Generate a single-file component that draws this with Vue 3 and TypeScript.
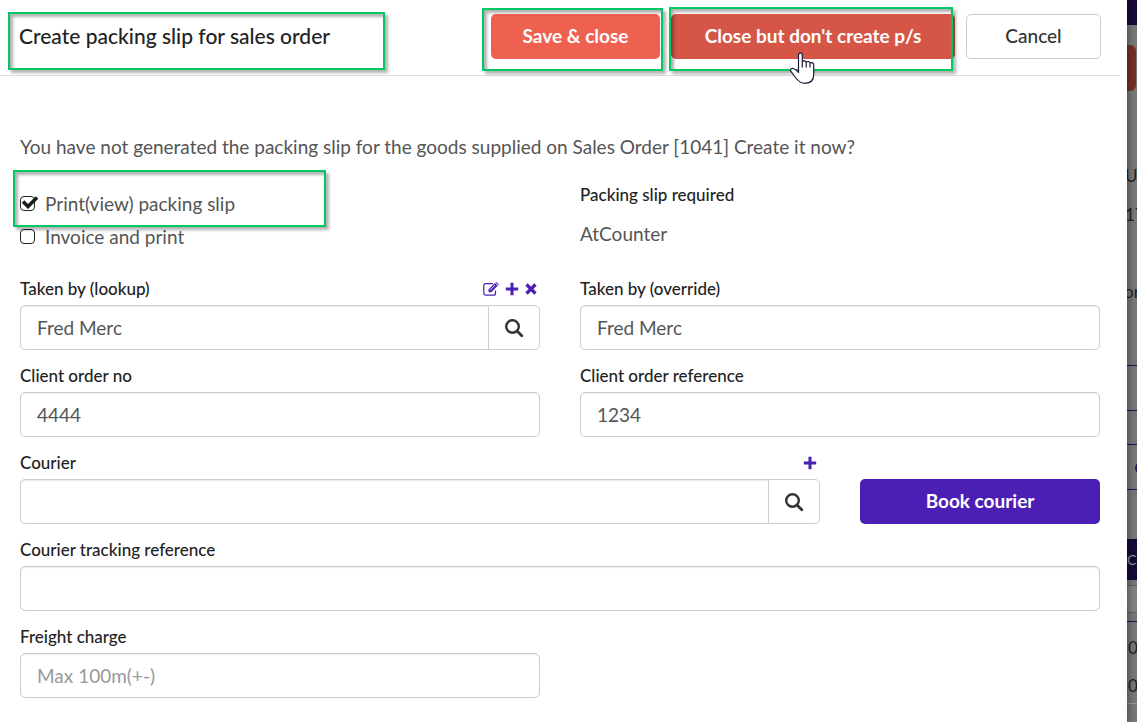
<script setup lang="ts">
import { reactive } from 'vue'

const form = reactive({
  printSlip: true,
  invoicePrint: false,
  takenBy: 'Fred Merc',
  takenByOverride: 'Fred Merc',
  orderNo: '4444',
  orderRef: '1234',
  courier: '',
  tracking: '',
  freight: '',
})
</script>

<template>
  <div class="screen">
    <main class="dialog" role="dialog" aria-labelledby="dialog-title">
      <header class="bar">
        <div class="title-wrap">
          <h1 id="dialog-title">Create packing slip for sales order</h1>
          <span class="mark mark-title"></span>
        </div>
        <div class="actions">
          <div class="action save">
            <button type="button" class="btn primary">Save &amp; close</button>
            <span class="mark mark-save"></span>
          </div>
          <div class="action skip">
            <button type="button" class="btn primary hovered">Close but don't create p/s</button>
            <span class="mark mark-skip"></span>
            <svg class="pointer" width="26" height="34" viewBox="0 0 26 34" aria-hidden="true">
              <path d="M8.500 18.500V3.200C8.500 .2 12.300 .2 12.300 3.200V10C13.500 8.300 15.800 8.700 16.200 10.300C17.800 8.900 19.600 9.500 20 11C21.800 10 23.700 11 23.700 13V22.500C23.700 28 20.500 31.300 15 31.300C10.500 31.300 8 29 5.500 25.500L.8 19.200C-.2 17.200 1.500 16 3.200 16.500C5.500 17.200 7 18.800 8.500 20.200Z" fill="#fff" />
              <path d="M8.500 18.500V3.200C8.500 .2 12.300 .2 12.300 3.200V10C13.500 8.300 15.800 8.700 16.200 10.300C17.800 8.900 19.600 9.500 20 11C21.800 10 23.700 11 23.700 13V22.500C23.700 28 20.500 31.300 15 31.300C10.500 31.300 8 29 5.500 25.500L.8 19.200C-.2 17.200 1.500 16 3.200 16.500C5.500 17.200 7 18.800 8.500 20.200ZM12.300 10V15.500M16.200 10.300V15.500M20 11V15.500" fill="none" stroke="#1d1a33" stroke-width="1.200" />
            </svg>
          </div>
          <div class="action cancel">
            <button type="button" class="btn plain">Cancel</button>
          </div>
        </div>
      </header>

      <form class="body" @submit.prevent>
        <p class="intro">You have not generated the packing slip for the goods supplied on Sales Order [1041] Create it now?</p>

        <div class="two top-row">
          <div class="checks">
            <label class="check"><input v-model="form.printSlip" type="checkbox" />
              <svg v-if="form.printSlip" class="tick" width="18" height="14" viewBox="0 0 18 14" aria-hidden="true"><path d="M2 6.500L7 11.500L16 2.500" fill="none" stroke="#1c1c1c" stroke-width="3.600" /></svg>
              <span>Print(view) packing slip</span>
            </label>
            <label class="check"><input v-model="form.invoicePrint" type="checkbox" /><span>Invoice and print</span></label>
            <span class="mark mark-check"></span>
          </div>
          <div>
            <div class="label">Packing slip required</div>
            <div class="value">AtCounter</div>
          </div>
        </div>

        <div class="two">
          <div class="field">
            <div class="label-row">
              <label class="label" for="taken">Taken by (lookup)</label>
              <span class="tools">
                <button type="button" class="tool" aria-label="Edit">
                  <svg width="16" height="14" viewBox="0 0 16 14"><path d="M12.500 8.500V11.200A2 2 0 0 1 10.500 13.200H2.800A2 2 0 0 1 .8 11.200V3.600A2 2 0 0 1 2.800 1.600H10" fill="none" stroke="currentColor" stroke-width="1.200" /><path d="M5.500 10.200V7.400L11.900 1L14.700 3.800L8.300 10.200Z" fill="currentColor" /><path d="M12.500 .5L13.300 0L15.900 2.600L15.300 3.300Z" fill="currentColor" /><path d="M7 8.200L12 3.200" stroke="#fff" stroke-width=".8" /></svg>
                </button>
                <button type="button" class="tool" aria-label="Add">
                  <svg width="14" height="14" viewBox="0 0 14 14"><path d="M7 .8V13.200M.8 7H13.200" stroke="currentColor" stroke-width="3" /></svg>
                </button>
                <button type="button" class="tool" aria-label="Clear">
                  <svg width="12" height="12" viewBox="0 0 12 12"><path d="M1.500 1.500L10.500 10.500M10.500 1.500L1.500 10.500" stroke="currentColor" stroke-width="3.200" /></svg>
                </button>
              </span>
            </div>
            <div class="group">
              <input id="taken" v-model="form.takenBy" type="text" />
              <button type="button" class="find" aria-label="Find person">
                <svg width="20" height="20" viewBox="0 0 20 20"><circle cx="8.500" cy="8.500" r="6.300" fill="none" stroke="currentColor" stroke-width="2.400" /><path d="M13 13L17.800 17.800" stroke="currentColor" stroke-width="2.800" stroke-linecap="round" /></svg>
              </button>
            </div>
          </div>
          <div class="field">
            <label class="label" for="override">Taken by (override)</label>
            <input id="override" v-model="form.takenByOverride" type="text" />
          </div>
        </div>

        <div class="two">
          <div class="field">
            <label class="label" for="order-no">Client order no</label>
            <input id="order-no" v-model="form.orderNo" type="text" />
          </div>
          <div class="field">
            <label class="label" for="order-ref">Client order reference</label>
            <input id="order-ref" v-model="form.orderRef" type="text" />
          </div>
        </div>

        <div class="courier-row">
          <div class="field">
            <div class="label-row">
              <label class="label" for="courier">Courier</label>
              <span class="tools">
                <button type="button" class="tool" aria-label="Add courier">
                  <svg width="14" height="14" viewBox="0 0 14 14"><path d="M7 .8V13.200M.8 7H13.200" stroke="currentColor" stroke-width="3" /></svg>
                </button>
              </span>
            </div>
            <div class="group">
              <input id="courier" v-model="form.courier" type="text" />
              <button type="button" class="find" aria-label="Find courier">
                <svg width="20" height="20" viewBox="0 0 20 20"><circle cx="8.500" cy="8.500" r="6.300" fill="none" stroke="currentColor" stroke-width="2.400" /><path d="M13 13L17.800 17.800" stroke="currentColor" stroke-width="2.800" stroke-linecap="round" /></svg>
              </button>
            </div>
          </div>
          <button type="button" class="btn book">Book courier</button>
        </div>

        <div class="field">
          <label class="label" for="tracking">Courier tracking reference</label>
          <input id="tracking" v-model="form.tracking" type="text" />
        </div>

        <div class="two">
          <div class="field">
            <label class="label" for="freight">Freight charge</label>
            <input id="freight" v-model="form.freight" type="text" placeholder="Max 100m(+-)" />
          </div>
        </div>
      </form>
    </main>

    <aside class="behind" aria-hidden="true">
      <div class="nav"></div>
      <div class="red"></div>
      <div class="texts"><span>U</span><span>17</span></div>
      <div class="lone">or</div>
      <div class="line first"></div>
      <div class="line second"></div>
      <div class="dot-row"><i></i></div>
      <div class="blank"></div>
      <div class="band">C</div>
      <div class="box"></div>
      <div class="zeros"><span>0</span><span>0</span></div>
      <div class="rest"></div>
    </aside>
  </div>
</template>

<style>
body {
  background: #777;
}
</style>

<style scoped>
* {
  box-sizing: border-box;
}
.screen {
  display: flex;
  min-height: 100vh;
  font-family: Lato, "Liberation Sans", sans-serif;
  font-size: 19px;
  line-height: 24px;
  color: #555;
}
button,
input {
  font: inherit;
}
.dialog {
  flex: 1;
  min-width: 0;
  background: #fff;
  padding-right: 7px;
  z-index: 1;
  box-shadow: 0 0 8px rgba(0, 0, 0, 0.5);
}
.bar {
  display: flex;
  justify-content: space-between;
  padding: 14px 19px 16px;
  border-bottom: 1px solid #e0e0e0;
}
.title-wrap,
.action,
.checks {
  position: relative;
}
h1 {
  margin: 0;
  font-size: 21px;
  font-weight: 500;
  line-height: 44px;
  color: #222;
}
.actions {
  display: flex;
  gap: 11px;
}
.save {
  width: 169px;
}
.skip {
  width: 284px;
}
.cancel {
  width: 135px;
}
.btn {
  width: 100%;
  height: 45px;
  padding: 0 0 1px;
  border: 0;
  border-radius: 5px;
  font-weight: 700;
  color: #fff;
}
.primary {
  background: #ee6050;
}
.primary.hovered {
  background: #d55646;
}
.plain {
  background: #fff;
  border: 1px solid #ccc;
  color: #333;
  font-weight: 500;
}
.mark {
  position: absolute;
  border: 2px solid #00c864;
  box-shadow: 3px 3px 3px rgba(0, 0, 0, 0.3), inset 3px 3px 3px rgba(0, 0, 0, 0.3);
  pointer-events: none;
}
.mark-title {
  left: -11px;
  top: -2px;
  width: 377px;
  height: 58px;
}
.mark-save {
  inset: -6px -3px -12px -9px;
}
.mark-skip {
  inset: -7px 2px -12px -2px;
}
.mark-check {
  left: -7px;
  top: -13px;
  width: 313px;
  height: 57px;
}
.pointer {
  position: absolute;
  left: 119px;
  top: 38px;
}
.body {
  display: flex;
  flex-direction: column;
  gap: 14px;
  padding: 59px 20px 24px;
}
.intro {
  margin: 0 0 10px;
}
.two {
  display: grid;
  grid-template-columns: 1fr 1fr;
  gap: 40px;
}
.top-row {
  min-height: 80px;
}
.checks {
  padding-top: 4px;
}
.check {
  position: relative;
  display: flex;
  align-items: center;
  gap: 10px;
  height: 33px;
}
.check input {
  appearance: none;
  width: 15px;
  height: 15px;
  margin: 0;
  border: 1px solid #222;
  border-radius: 4px;
  background: #fff;
}
.tick {
  position: absolute;
  left: 1px;
  top: 8px;
}
.label {
  display: block;
  font-size: 17px;
  font-weight: 500;
  line-height: 24px;
  color: #222;
}
.value {
  margin-top: 15px;
}
.label-row {
  display: flex;
  justify-content: space-between;
}
.tools {
  display: flex;
  align-items: center;
  gap: 6px;
  padding-right: 3px;
}
.tool {
  display: flex;
  padding: 0;
  border: 0;
  background: none;
  color: #4b1eb4;
}
.field {
  display: flex;
  flex-direction: column;
  gap: 4px;
}
.field input {
  width: 100%;
  height: 45px;
  padding: 0 16px;
  border: 1px solid #ccc;
  border-radius: 5px;
  background: #fff;
  box-shadow: inset 0 1px 1px rgba(0, 0, 0, 0.08);
  color: #555;
}
.field input::placeholder {
  color: #999;
  opacity: 1;
}
.group {
  display: flex;
}
.group input {
  flex: 1;
  min-width: 0;
  border-radius: 5px 0 0 5px;
}
.find {
  display: flex;
  align-items: center;
  justify-content: center;
  width: 52px;
  height: 45px;
  margin-left: -1px;
  padding: 0;
  border: 1px solid #ccc;
  border-radius: 0 5px 5px 0;
  background: #fff;
  color: #333;
}
.courier-row {
  display: grid;
  grid-template-columns: 1fr 240px;
  align-items: end;
  gap: 40px;
}
.book {
  background: #4b1eb4;
}
.behind {
  width: 10px;
  overflow: hidden;
  background: #777;
  color: #222;
  font-size: 17px;
}
.nav {
  height: 25px;
  margin-bottom: 20px;
  background: #170a38;
}
.red {
  height: 46px;
  margin-right: 1px;
  border-radius: 0 6px 6px 0;
  background: #77302a;
}
.texts {
  display: flex;
  flex-direction: column;
  gap: 15px;
  padding-top: 73px;
}
.texts span {
  height: 24px;
  margin-left: -2px;
}
.lone {
  height: 78px;
  margin-top: 53px;
  margin-left: -3px;
}
.line {
  border-top: 1px solid #23105a;
}
.line.first {
  margin-top: 7px;
  height: 45px;
}
.line.second {
  height: 34px;
}
.dot-row {
  height: 45px;
  padding: 17px 0 0 8px;
  border-top: 1px solid #23105a;
}
.dot-row i {
  display: block;
  width: 12px;
  height: 12px;
  border-radius: 6px;
  background: #2d1268;
}
.blank {
  height: 50px;
  border-top: 1px solid #23105a;
}
.band {
  height: 41px;
  margin-bottom: 5px;
  line-height: 41px;
  background: #170a38;
  color: #999;
  font-size: 14px;
}
.box {
  height: 28px;
  border: solid #5f5f5f;
  border-width: 1px 0;
  background: #808080;
}
.zeros {
  display: flex;
  flex-direction: column;
  gap: 14px;
  height: 82px;
  margin-top: 8px;
  padding: 14px 0 0 1px;
  border-top: 1px solid #23105a;
}
.rest {
  border-top: 1px solid #999;
}
</style>
